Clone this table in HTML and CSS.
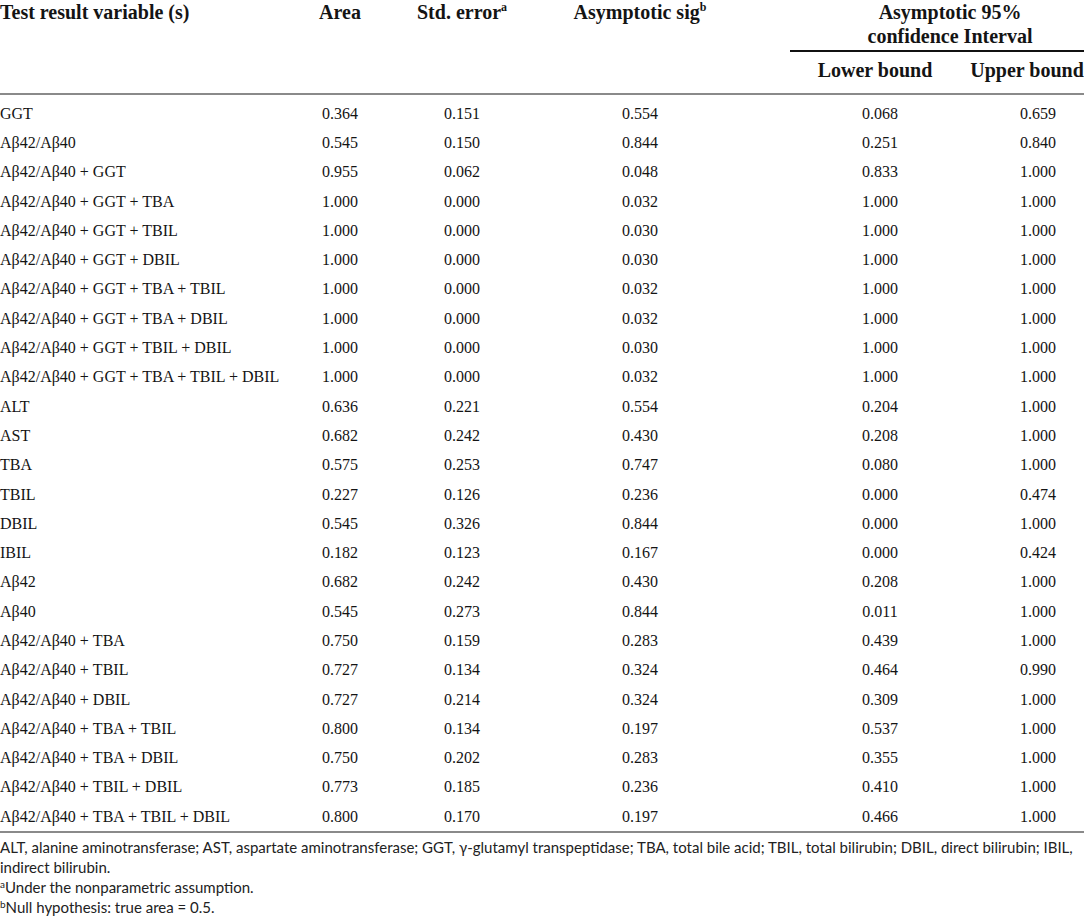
FILE: index.html
```html
<!DOCTYPE html>
<html lang="en">
<head>
<meta charset="utf-8">
<title>ROC analysis table</title>
<link rel="stylesheet" href="styles.css">
</head>
<body>
<div class="page">
<table class="roc">
  <colgroup>
    <col class="c-var">
    <col class="c-area">
    <col class="c-se">
    <col class="c-sig">
    <col class="c-gap">
    <col class="c-lo">
    <col class="c-up">
  </colgroup>
  <thead>
    <tr class="h1">
      <th class="var" rowspan="2">Test result variable (s)</th>
      <th rowspan="2">Area</th>
      <th rowspan="2">Std. error<sup>a</sup></th>
      <th rowspan="2">Asymptotic sig<sup>b</sup></th>
      <th rowspan="2"></th>
      <th class="ci" colspan="2">Asymptotic 95%<br>confidence Interval</th>
    </tr>
    <tr class="h2">
      <th class="lo">Lower bound</th>
      <th class="up">Upper bound</th>
    </tr>
  </thead>
  <tbody>
    <tr class="first"><td class="var">GGT</td><td>0.364</td><td>0.151</td><td>0.554</td><td></td><td class="lo">0.068</td><td class="up">0.659</td></tr>
    <tr><td class="var">Aβ42/Aβ40</td><td>0.545</td><td>0.150</td><td>0.844</td><td></td><td class="lo">0.251</td><td class="up">0.840</td></tr>
    <tr><td class="var">Aβ42/Aβ40 + GGT</td><td>0.955</td><td>0.062</td><td>0.048</td><td></td><td class="lo">0.833</td><td class="up">1.000</td></tr>
    <tr><td class="var">Aβ42/Aβ40 + GGT + TBA</td><td>1.000</td><td>0.000</td><td>0.032</td><td></td><td class="lo">1.000</td><td class="up">1.000</td></tr>
    <tr><td class="var">Aβ42/Aβ40 + GGT + TBIL</td><td>1.000</td><td>0.000</td><td>0.030</td><td></td><td class="lo">1.000</td><td class="up">1.000</td></tr>
    <tr><td class="var">Aβ42/Aβ40 + GGT + DBIL</td><td>1.000</td><td>0.000</td><td>0.030</td><td></td><td class="lo">1.000</td><td class="up">1.000</td></tr>
    <tr><td class="var">Aβ42/Aβ40 + GGT + TBA + TBIL</td><td>1.000</td><td>0.000</td><td>0.032</td><td></td><td class="lo">1.000</td><td class="up">1.000</td></tr>
    <tr><td class="var">Aβ42/Aβ40 + GGT + TBA + DBIL</td><td>1.000</td><td>0.000</td><td>0.032</td><td></td><td class="lo">1.000</td><td class="up">1.000</td></tr>
    <tr><td class="var">Aβ42/Aβ40 + GGT + TBIL + DBIL</td><td>1.000</td><td>0.000</td><td>0.030</td><td></td><td class="lo">1.000</td><td class="up">1.000</td></tr>
    <tr><td class="var">Aβ42/Aβ40 + GGT + TBA + TBIL + DBIL</td><td>1.000</td><td>0.000</td><td>0.032</td><td></td><td class="lo">1.000</td><td class="up">1.000</td></tr>
    <tr><td class="var">ALT</td><td>0.636</td><td>0.221</td><td>0.554</td><td></td><td class="lo">0.204</td><td class="up">1.000</td></tr>
    <tr><td class="var">AST</td><td>0.682</td><td>0.242</td><td>0.430</td><td></td><td class="lo">0.208</td><td class="up">1.000</td></tr>
    <tr><td class="var">TBA</td><td>0.575</td><td>0.253</td><td>0.747</td><td></td><td class="lo">0.080</td><td class="up">1.000</td></tr>
    <tr><td class="var">TBIL</td><td>0.227</td><td>0.126</td><td>0.236</td><td></td><td class="lo">0.000</td><td class="up">0.474</td></tr>
    <tr><td class="var">DBIL</td><td>0.545</td><td>0.326</td><td>0.844</td><td></td><td class="lo">0.000</td><td class="up">1.000</td></tr>
    <tr><td class="var">IBIL</td><td>0.182</td><td>0.123</td><td>0.167</td><td></td><td class="lo">0.000</td><td class="up">0.424</td></tr>
    <tr><td class="var">Aβ42</td><td>0.682</td><td>0.242</td><td>0.430</td><td></td><td class="lo">0.208</td><td class="up">1.000</td></tr>
    <tr><td class="var">Aβ40</td><td>0.545</td><td>0.273</td><td>0.844</td><td></td><td class="lo">0.011</td><td class="up">1.000</td></tr>
    <tr><td class="var">Aβ42/Aβ40 + TBA</td><td>0.750</td><td>0.159</td><td>0.283</td><td></td><td class="lo">0.439</td><td class="up">1.000</td></tr>
    <tr><td class="var">Aβ42/Aβ40 + TBIL</td><td>0.727</td><td>0.134</td><td>0.324</td><td></td><td class="lo">0.464</td><td class="up">0.990</td></tr>
    <tr><td class="var">Aβ42/Aβ40 + DBIL</td><td>0.727</td><td>0.214</td><td>0.324</td><td></td><td class="lo">0.309</td><td class="up">1.000</td></tr>
    <tr><td class="var">Aβ42/Aβ40 + TBA + TBIL</td><td>0.800</td><td>0.134</td><td>0.197</td><td></td><td class="lo">0.537</td><td class="up">1.000</td></tr>
    <tr><td class="var">Aβ42/Aβ40 + TBA + DBIL</td><td>0.750</td><td>0.202</td><td>0.283</td><td></td><td class="lo">0.355</td><td class="up">1.000</td></tr>
    <tr><td class="var">Aβ42/Aβ40 + TBIL + DBIL</td><td>0.773</td><td>0.185</td><td>0.236</td><td></td><td class="lo">0.410</td><td class="up">1.000</td></tr>
    <tr><td class="var">Aβ42/Aβ40 + TBA + TBIL + DBIL</td><td>0.800</td><td>0.170</td><td>0.197</td><td></td><td class="lo">0.466</td><td class="up">1.000</td></tr>
  </tbody>
</table>
<div class="notes">
  <p>ALT, alanine aminotransferase; AST, aspartate aminotransferase; GGT, γ-glutamyl transpeptidase; TBA, total bile acid; TBIL, total bilirubin; DBIL, direct bilirubin; IBIL, indirect bilirubin.</p>
  <p><sup>a</sup>Under the nonparametric assumption.</p>
  <p><sup>b</sup>Null hypothesis: true area = 0.5.</p>
</div>
</div>
</body>
</html>
```
FILE: styles.css
```css
html, body {
  margin: 0;
  padding: 0;
  background: #ffffff;
}

.page {
  width: 1084px;
  color: #141414;
}

.roc {
  width: 1084px;
  border-collapse: collapse;
  table-layout: fixed;
  font-family: "Liberation Serif", "Times New Roman", serif;
}

.c-var { width: 280px; }
.c-area { width: 120px; }
.c-se { width: 124px; }
.c-sig { width: 232px; }
.c-gap { width: 34px; }
.c-lo { width: 180px; }
.c-up { width: 114px; }

.roc th {
  font-weight: bold;
  font-size: 20px;
  line-height: 24px;
  text-align: center;
  vertical-align: top;
  padding: 0;
  white-space: nowrap;
}

.roc th sup {
  font-size: 12px;
  line-height: 0;
  vertical-align: 8px;
}

.roc th.var {
  text-align: left;
}

.h1 th.ci {
  height: 51px;
  box-sizing: border-box;
  padding-left: 26px;
  border-bottom: 2px solid #111;
}

.h2 th {
  height: 43px;
  padding-top: 6px;
  box-sizing: border-box;
}

.h2 th.lo { padding-right: 10px; }
.h2 th.up { padding-left: 0; }

.roc thead {
  border-bottom: 2px solid #8a8a8a;
}

.roc tbody {
  border-bottom: 2px solid #8a8a8a;
}

.roc td {
  font-size: 16px;
  height: 29.3px;
  line-height: 20px;
  padding: 0;
  text-align: center;
  vertical-align: middle;
  white-space: nowrap;
}

.roc tr.first td {
  height: 34.3px;
  padding-top: 5px;
  box-sizing: border-box;
}

.roc td.var {
  text-align: left;
}

.roc td.lo { padding-left: 0; }
.roc td.up { padding-left: 22px; }

.notes {
  font-family: "Lato", "Noto Sans", sans-serif;
  font-size: 15px;
  line-height: 20px;
  color: #222;
  padding-top: 4px;
}

.notes p {
  margin: 0;
}

.notes sup {
  font-size: 10px;
  line-height: 0;
  vertical-align: 5px;
}
```
